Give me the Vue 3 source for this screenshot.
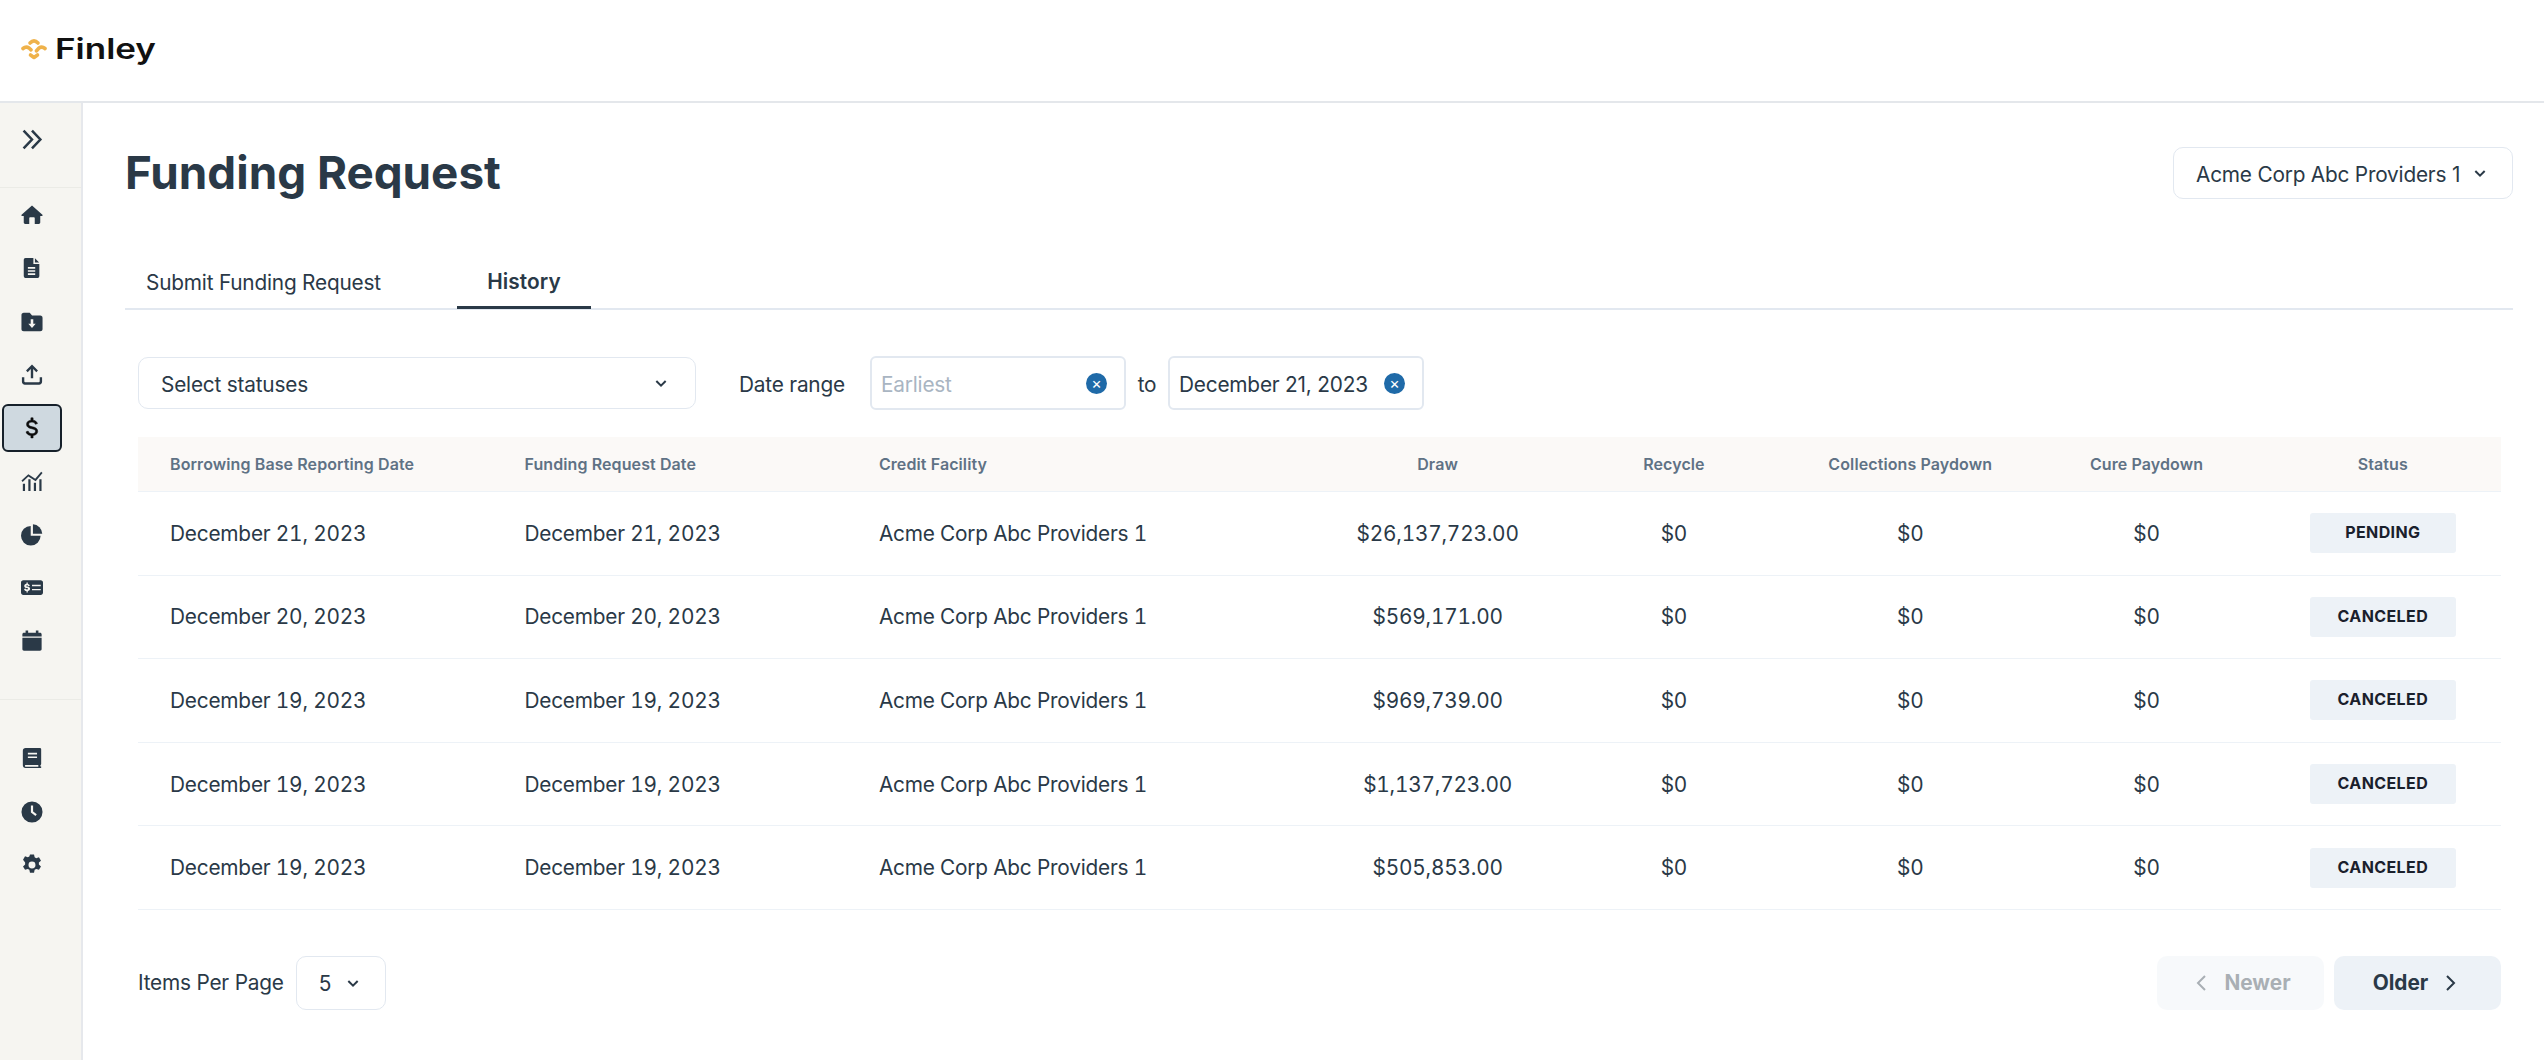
<template>
  <div class="app">
    <header class="topbar">
      <div class="logo">
        <svg class="logo-mark" viewBox="0 0 26 22" fill="none" stroke="#efb24a" stroke-width="3.6" stroke-linecap="round" stroke-linejoin="round">
          <path d="M9 5 Q13 .8 17 5" />
          <path d="M2 10.500 Q5 8 8 10 L10 11.800" />
          <path d="M24 10.500 Q21 8 18 10 L15.500 12.800" />
          <path d="M9.500 17 L13 19.500 L16.500 17" />
        </svg>
        <span class="logo-text">Finley</span>
      </div>
    </header>

    <div class="body">
      <aside class="sidebar">
        <div class="side-top">
          <button class="side-btn expand">
            <svg viewBox="0 0 20 20">
              <path d="M1.500 1.500 9.500 10l-8 8.500M9.500 1.500l8 8.500-8 8.500" />
            </svg>
          </button>
        </div>
        <nav class="side-group">
          <button
            v-for="item in mainNav"
            :key="item.name"
            :class="['side-btn', { active: item.name === 'funding' }]"
          >
            <svg viewBox="0 0 24 24" v-html="item.icon"></svg>
          </button>
        </nav>
        <nav class="side-group bottom">
          <button v-for="item in bottomNav" :key="item.name" class="side-btn">
            <svg viewBox="0 0 24 24" v-html="item.icon"></svg>
          </button>
        </nav>
      </aside>

      <main class="main">
        <div class="title-row">
          <h1>Funding Request</h1>
          <div class="select facility-select">
            <span>Acme Corp Abc Providers 1</span>
            <svg class="chev" viewBox="0 0 12 12"><path d="M2.500 4.500 6 8l3.500-3.500" /></svg>
          </div>
        </div>

        <div class="tabs">
          <div class="tab">Submit Funding Request</div>
          <div class="tab current">History</div>
        </div>

        <div class="panel">
          <div class="filters">
            <div class="select status-select">
              <span>Select statuses</span>
              <svg class="chev" viewBox="0 0 12 12"><path d="M2.500 4.500 6 8l3.500-3.500" /></svg>
            </div>
            <span class="range-label">Date range</span>
            <div class="date-input">
              <span class="placeholder">Earliest</span>
              <span class="clear">×</span>
            </div>
            <span class="to">to</span>
            <div class="date-input">
              <span>December 21, 2023</span>
              <span class="clear">×</span>
            </div>
          </div>

          <table class="requests">
            <colgroup>
              <col class="w15" />
              <col class="w15" />
              <col class="w20" />
              <col v-for="n in 5" :key="n" class="w10" />
            </colgroup>
            <thead>
              <tr>
                <th class="left">Borrowing Base Reporting Date</th>
                <th class="left">Funding Request Date</th>
                <th class="left">Credit Facility</th>
                <th>Draw</th>
                <th>Recycle</th>
                <th>Collections Paydown</th>
                <th>Cure Paydown</th>
                <th>Status</th>
              </tr>
            </thead>
            <tbody>
              <tr v-for="(row, i) in rows" :key="i">
                <td class="left">{{ row.date }}</td>
                <td class="left">{{ row.date }}</td>
                <td class="left">Acme Corp Abc Providers 1</td>
                <td>{{ row.draw }}</td>
                <td>$0</td>
                <td>$0</td>
                <td>$0</td>
                <td><span class="badge">{{ row.status }}</span></td>
              </tr>
            </tbody>
          </table>

          <div class="pager">
            <div class="per-page">
              <span>Items Per Page</span>
              <div class="select size-select">
                <span>5</span>
                <svg class="chev" viewBox="0 0 12 12"><path d="M2.500 4.500 6 8l3.500-3.500" /></svg>
              </div>
            </div>
            <div class="pager-btns">
              <button class="page-btn" disabled>
                <svg viewBox="0 0 12 12"><path d="M7.500 2.500 4 6l3.500 3.500" /></svg>
                Newer
              </button>
              <button class="page-btn">
                Older
                <svg viewBox="0 0 12 12"><path d="M4.500 2.500 8 6 4.500 9.500" /></svg>
              </button>
            </div>
          </div>
        </div>
      </main>
    </div>
  </div>
</template>

<script setup>
const mainNav = [
  {
    name: 'home',
    icon: '<path d="M12 1.500 .6 11.700c-.5.5-.2 1.300.5 1.300H3v7.300c0 .9.7 1.600 1.600 1.600H9v-6.600c0-.5.4-.9.9-.9h4.200c.5 0 .9.4.9.9v6.600h4.400c.9 0 1.600-.7 1.600-1.600V13h1.900c.7 0 1-.8.5-1.300Z"/>',
  },
  {
    name: 'document',
    icon: '<path fill-rule="evenodd" d="M5 1h8.500v6.500H20v13.200c0 1.300-1 2.300-2.300 2.300H5.300C4 23 3 22 3 20.700V3.300C3 2 3.700 1 5 1Zm10.200.4L19.800 6h-4.600ZM7.500 11v1.800h8V11Zm0 3.400v1.800h8v-1.800Zm0 3.400v1.800h8v-1.800Z"/>',
  },
  {
    name: 'folder',
    icon: '<path fill-rule="evenodd" d="M3 2h6.500l2.600 3H21c1.600 0 2.500 1 2.500 2.500v12c0 1.500-1 2.500-2.500 2.500H3c-1.600 0-2.500-1-2.500-2.500v-15C.5 3 1.500 2 3 2Zm7.600 7v5H8l4 4.600 4-4.600h-2.600V9Z"/>',
  },
  {
    name: 'upload',
    icon: '<path d="M12 .5 5.500 7.100l1.800 1.800 3.400-3.400v10h2.600v-10l3.400 3.400 1.800-1.800Z"/><path d="M1 14.500h2.600v4.400c0 .6.4 1 1 1h14.800c.6 0 1-.4 1-1v-4.400H23v4.800c0 1.800-1.400 3.200-3.200 3.200H4.200c-1.800 0-3.200-1.400-3.200-3.200Z"/>',
  },
  {
    name: 'funding',
    icon: '<path stroke="#0c0c0c" stroke-width=".7" d="M10.600 0h2.800v3c2.700.3 4.800 1.800 5.600 4.300l-2.700.9c-.6-1.800-2.200-2.800-4.300-2.800-2.600 0-4.200 1.100-4.200 2.800 0 1.800 1.400 2.500 4.600 3.200 4 .9 6.900 2.100 6.900 5.800 0 3-2.400 5-5.900 5.500v3h-2.800v-3c-3-.3-5.400-2-6.300-4.700l2.700-1c.7 2.200 2.700 3.300 5.100 3.300 2.800 0 4.400-1.200 4.400-3 0-1.900-1.500-2.600-4.700-3.300-3.900-.8-6.800-2-6.800-5.700 0-2.900 2.200-4.900 5.600-5.300Z" transform="translate(12 12) scale(.85) translate(-12 -13)"/>',
  },
  {
    name: 'chart',
    icon: '<path d="M.5 11.500 8 4.500l7.500 5L22 2l1.500 1.400-7.500 9-8-5.200-6.200 6Z"/><path d="M2 15h2.400v8H2Zm6-5h2.400v13H8Zm6 4h2.400v9H14Zm6-4h2.400v13H20Z"/>',
  },
  {
    name: 'pie',
    icon: '<path d="M10.600 2.100A10.700 10.700 0 1 0 21.400 12.900H10.600Z"/><path d="M13 .3v10.200h10.200A10.700 10.700 0 0 0 13 .3Z"/>',
  },
  {
    name: 'card',
    icon: '<path fill-rule="evenodd" d="M2.500 3.500h19C22.900 3.500 24 4.500 24 6v11c0 1.500-1.100 2.500-2.500 2.500h-19C1.100 19.500 0 18.500 0 17V6c0-1.500 1.100-2.500 2.500-2.500ZM12 8.500V10h9.500V8.500ZM12 13v1.500h9.500V13ZM6 6v1.300C4.500 7.500 3.500 8.500 3.500 9.700c0 1.500 1.100 2 2.900 2.400 1 .2 1.300.4 1.300.8 0 .4-.4.7-1.100.7-.8 0-1.300-.3-1.500-1L3.300 13c.3 1.300 1.300 2.200 2.700 2.400V17h1.400v-1.600c1.500-.2 2.500-1.200 2.500-2.500 0-1.500-1-2.100-2.900-2.500-1-.2-1.300-.4-1.300-.7s.3-.6 1-.6c.6 0 1.100.3 1.300.9l1.700-.4c-.3-1.200-1.200-1.900-2.300-2.100V6Z"/>',
  },
  {
    name: 'calendar',
    icon: '<path d="M5 .5h2.800v2.600h8.400V.5H19v2.600h1.700c1.100 0 1.800.7 1.800 1.800v2.200h-21V4.900c0-1.100.7-1.800 1.800-1.800H5Z"/><path d="M1.500 8.500h21v12.200c0 1.100-.7 1.800-1.800 1.800H3.300c-1.100 0-1.800-.7-1.800-1.800Z"/>',
  },
]

const bottomNav = [
  {
    name: 'book',
    icon: '<path fill-rule="evenodd" d="M5 1h15.500c1 0 1.500.6 1.500 1.500v16c0 .6-.3 1-.8 1.200v1.600h.8V23H5c-2 0-3-1.300-3-3V4c0-1.800 1.200-3 3-3Zm2.500 5.400v1.700h10V6.400Zm0 4v1.700h10v-1.700ZM5.300 19.700c-.8 0-1 .5-1 .9s.3.9 1 .9h13.600v-1.800Z"/>',
  },
  {
    name: 'clock',
    icon: '<path fill-rule="evenodd" d="M12 .5a11.500 11.500 0 1 1 0 23 11.500 11.500 0 0 1 0-23ZM10.800 5v7.600l5 3.700 1.400-1.900-4-3V5Z"/>',
  },
  {
    name: 'settings',
    icon: '<path fill-rule="evenodd" d="M9.800.5h4.400l.7 3.100 1.700.9 3-1 2.200 3.800-2.300 2.100v2l2.300 2.100-2.200 3.800-3-1-1.700 1-.7 3.100H9.800l-.7-3.100-1.700-1-3 1-2.200-3.800 2.300-2.100v-2L2.200 6.300l2.200-3.800 3 1 1.700-.9ZM12 8.200a3.800 3.800 0 1 0 0 7.600 3.800 3.800 0 0 0 0-7.600Z"/>',
  },
]

const rows = [
  { date: 'December 21, 2023', draw: '$26,137,723.00', status: 'PENDING' },
  { date: 'December 20, 2023', draw: '$569,171.00', status: 'CANCELED' },
  { date: 'December 19, 2023', draw: '$969,739.00', status: 'CANCELED' },
  { date: 'December 19, 2023', draw: '$1,137,723.00', status: 'CANCELED' },
  { date: 'December 19, 2023', draw: '$505,853.00', status: 'CANCELED' },
]
</script>

<style>
html,
body {
  margin: 0;
  background: #fff;
}
</style>

<style scoped>
.app {
  height: 1060px;
  display: flex;
  flex-direction: column;
  overflow: hidden;
  font-family: Inter, "Liberation Sans", sans-serif;
  font-size: 20.8px;
  letter-spacing: -0.2px;
  color: #2a3947;
}

.topbar {
  height: 101px;
  flex: none;
  display: flex;
  align-items: center;
  padding-left: 21px;
  border-bottom: 2px solid #e4e7eb;
  box-sizing: content-box;
}

.logo {
  display: flex;
  align-items: center;
  gap: 8px;
  margin-top: -4px;
}

.logo-mark {
  width: 26px;
  height: 22px;
}

.logo-text {
  font-size: 28px;
  font-weight: 600;
  color: #111;
  letter-spacing: 0;
  line-height: 1;
  transform: scaleX(1.25);
  transform-origin: left center;
}

.body {
  flex: 1;
  display: flex;
  min-height: 0;
}

.sidebar {
  width: 81px;
  flex: none;
  background: #f6f5f1;
  border-right: 2px solid #e6e8ec;
  display: flex;
  flex-direction: column;
}

.side-top {
  height: 85px;
  flex: none;
  padding: 12px 0 0 2px;
  box-sizing: border-box;
  border-bottom: 1px solid #ebebe6;
}

.side-group {
  display: flex;
  flex-direction: column;
  padding: 3px 0 34px 2px;
  gap: 5.3px;
}

.side-group.bottom {
  border-top: 1px solid #ebebe6;
  padding-top: 34px;
}

.side-btn {
  width: 60px;
  height: 48px;
  padding: 0;
  background: none;
  border: 2px solid transparent;
  border-radius: 6px;
  display: flex;
  align-items: center;
  justify-content: center;
}

.side-btn svg {
  width: 22px;
  height: 22px;
  fill: #2a3947;
}

.side-btn.expand svg {
  width: 21px;
  height: 21px;
  fill: none;
  stroke: #2a3947;
  stroke-width: 2.4;
}

.side-btn.active {
  background: #cfd9e0;
  border-color: #16202a;
}

.side-btn.active svg {
  fill: #0c0c0c;
}

.main {
  flex: 1;
  min-width: 0;
  padding: 44px 31px 0 42px;
  box-sizing: border-box;
}

.title-row {
  display: flex;
  justify-content: space-between;
  align-items: center;
  height: 52px;
}

h1 {
  margin: 0;
  font-size: 45.8px;
  font-weight: 700;
  letter-spacing: 0;
  line-height: 52px;
  color: #2a3947;
}

.select {
  display: flex;
  align-items: center;
  justify-content: space-between;
  height: 52px;
  box-sizing: border-box;
  border: 1.6px solid #e2e8f0;
  border-radius: 10px;
  background: #fff;
}

.select span,
.date-input span:first-child {
  padding-top: 2px;
}

.chev {
  width: 16px;
  height: 16px;
  fill: none;
  stroke: #2a3947;
  stroke-width: 1.5;
}

.facility-select {
  width: 340px;
  padding: 0 24px 0 22px;
}

.tabs {
  display: flex;
  margin-top: 59px;
  height: 50px;
  border-bottom: 2px solid #e2e8f0;
}

.tab {
  padding: 0 21px 1px;
  width: 332px;
  box-sizing: border-box;
  display: flex;
  align-items: center;
}

.tab.current {
  width: 134px;
  justify-content: center;
  font-weight: 600;
  letter-spacing: 0.1px;
  border-bottom: 3px solid #2a3947;
  height: 51px;
}

.panel {
  padding: 46px 12px 0 13px;
}

.filters {
  display: flex;
  align-items: center;
  height: 54px;
}

.status-select {
  width: 558px;
  padding: 0 26px 0 22px;
}

.range-label {
  margin-left: 43px;
  width: 131px;
  padding-top: 2px;
}

.date-input {
  width: 256px;
  height: 54px;
  box-sizing: border-box;
  border: 2.4px solid #e2e8f0;
  border-radius: 6px;
  display: flex;
  align-items: center;
  justify-content: space-between;
  padding: 0 17px 0 9px;
}

.placeholder {
  color: #a9b5c2;
}

.clear {
  width: 21px;
  height: 21px;
  border-radius: 50%;
  background: #1f6aa8;
  color: #fff;
  font-size: 16px;
  line-height: 20px;
  text-align: center;
}

.to {
  width: 42px;
  text-align: center;
  padding-top: 2px;
}

.requests {
  width: 100%;
  margin-top: 27px;
  table-layout: fixed;
  border-collapse: collapse;
}

.w10 {
  width: 10%;
}

.w15 {
  width: 15%;
}

.w20 {
  width: 20%;
}

th {
  height: 54px;
  padding: 0;
  background: #fbf9f7;
  border-bottom: 1.6px solid #edf2f7;
  font-size: 16px;
  font-weight: 600;
  letter-spacing: 0.1px;
  color: #5f7285;
  text-align: center;
}

td {
  height: 83.6px;
  box-sizing: border-box;
  padding: 0;
  border-bottom: 1.6px solid #edf2f7;
  text-align: center;
  font-variant-numeric: tabular-nums;
}

th.left,
td.left {
  text-align: left;
  padding-left: 32px;
}

.badge {
  display: inline-block;
  width: 146px;
  height: 40px;
  line-height: 39px;
  background: #edf2f7;
  border-radius: 3px;
  font-size: 16px;
  font-weight: 700;
  letter-spacing: 0.4px;
  color: #1a202c;
  vertical-align: middle;
}

.pager {
  display: flex;
  justify-content: space-between;
  align-items: center;
  margin-top: 46px;
}

.per-page {
  display: flex;
  align-items: center;
  gap: 12px;
}

.size-select {
  width: 90px;
  height: 54px;
  padding: 0 24px 0 22px;
}

.pager-btns {
  display: flex;
  gap: 10px;
}

.page-btn {
  width: 167px;
  height: 54px;
  border: none;
  border-radius: 10px;
  background: #edf2f7;
  color: #2a3947;
  font-family: inherit;
  font-size: 20.8px;
  font-weight: 700;
  display: flex;
  align-items: center;
  justify-content: center;
  gap: 10px;
}

.page-btn svg {
  width: 24px;
  height: 24px;
  fill: none;
  stroke: currentColor;
  stroke-width: 1;
}

.page-btn:disabled {
  opacity: 0.4;
}
</style>
